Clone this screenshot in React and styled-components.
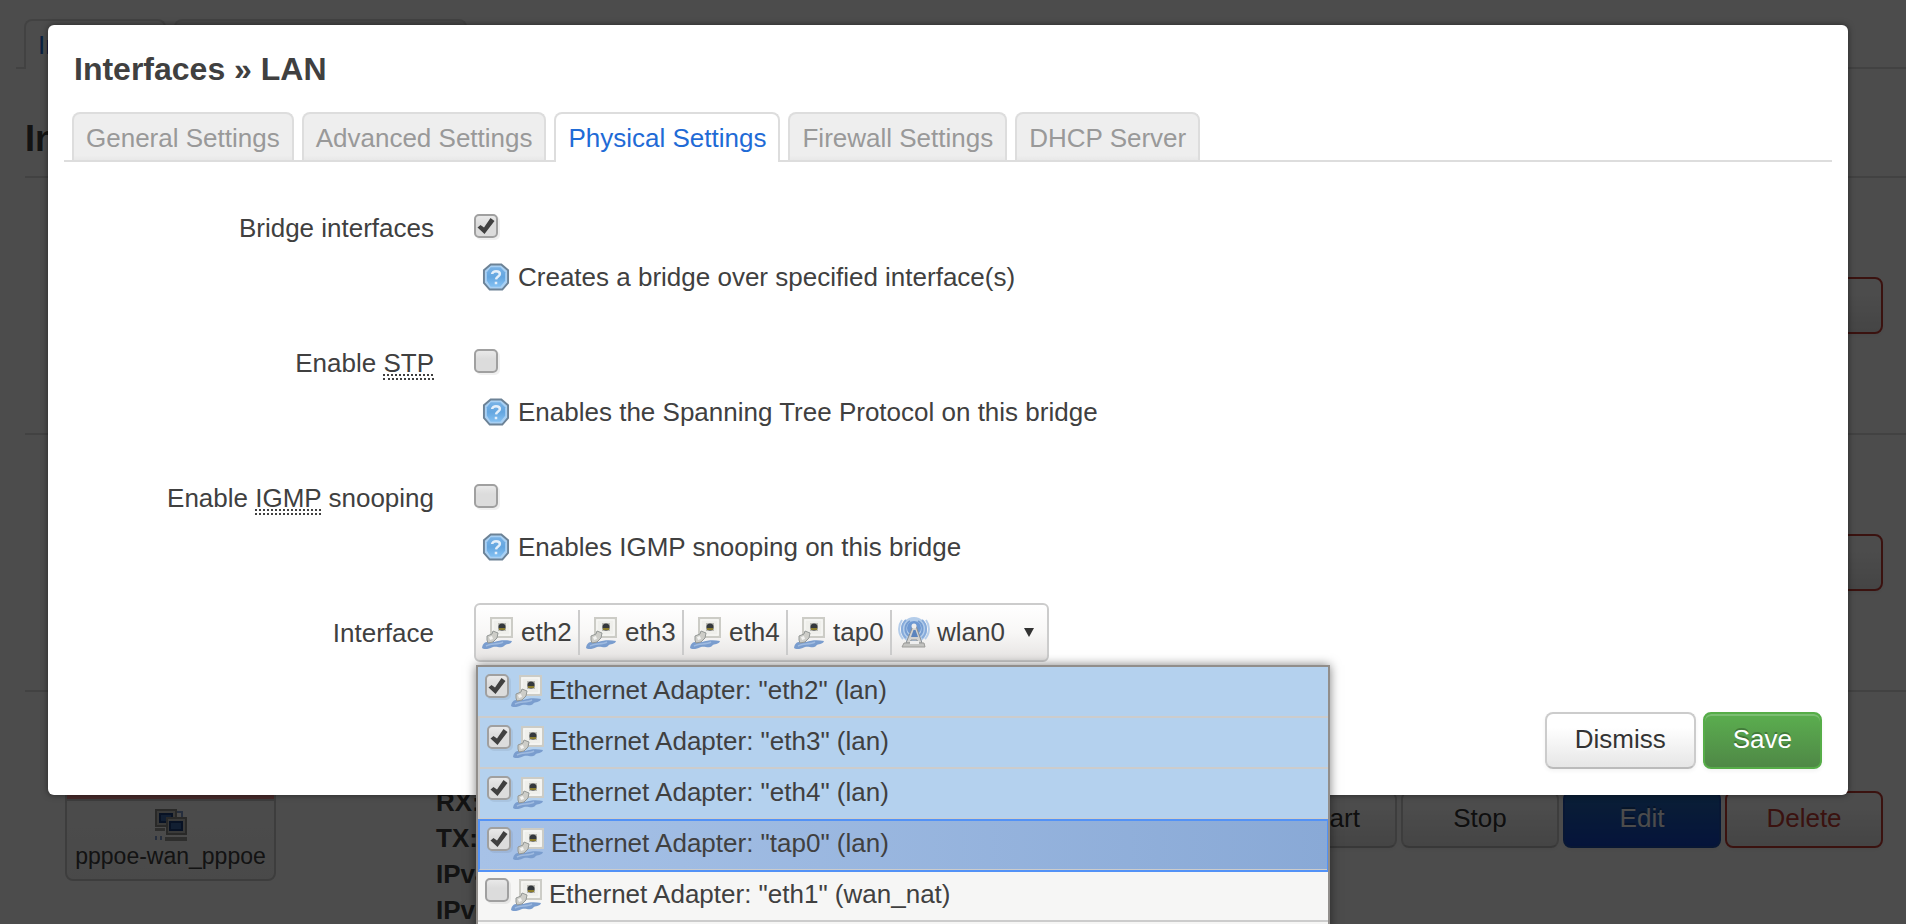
import React, { useId, useState } from "react";
import styled, { createGlobalStyle, css } from "styled-components";

const GlobalStyle = createGlobalStyle`
  * { box-sizing: border-box; }
  body {
    margin: 0;
    background: #fff;
    color: #404040;
    font: 26px/36px "Liberation Sans", Arial, sans-serif;
  }
  button, input { font: inherit; color: inherit; margin: 0; }
  h2, h3, p, ul { margin: 0; padding: 0; }
`;

/* ---------- shared parts ---------- */

const TabBar = styled.nav`
  display: flex;
  gap: 8px;
  padding: 0 8px;
  border-bottom: 2px solid #ddd;
`;

const Tab = styled.a`
  padding: 6px 12px 4px;
  border: 2px solid #ddd;
  border-bottom: 0;
  border-radius: 8px 8px 0 0;
  text-decoration: none;
  white-space: nowrap;
  ${(p) =>
    p.$active
      ? css`
          margin-bottom: -2px;
          padding-bottom: 6px;
          background: #fff;
          color: #1f6bd6;
        `
      : css`
          background: linear-gradient(#eee 90%, #e8e8e8);
          color: #999;
        `}
`;

const tones = {
  plain: css`
    background: linear-gradient(#fff 25%, #e6e6e6);
    border-color: #ccc #ccc #bbb;
    color: #333;
    text-shadow: 0 2px 2px rgba(255, 255, 255, 0.75);
  `,
  positive: css`
    background: linear-gradient(#5bae4f, #4f8846);
    border-color: #56ad48;
    color: #fff;
    text-shadow: 0 -2px 0 rgba(0, 0, 0, 0.25);
    box-shadow: inset 0 2px 0 rgba(255, 255, 255, 0.2), 0 2px 4px rgba(0, 0, 0, 0.05);
  `,
  primary: css`
    background: linear-gradient(#2468b4, #1244c4);
    border-color: #1c4fb0;
    color: #fff;
    text-shadow: 0 -2px 0 rgba(0, 0, 0, 0.25);
  `,
  negative: css`
    background: linear-gradient(#fff 25%, #e6e6e6);
    border-color: #c43c35;
    color: #c43c35;
  `,
};

const Button = styled.button`
  padding: 7px 28px 10px;
  border: 2px solid;
  border-radius: 8px;
  line-height: 36px;
  box-shadow: 0 2px 4px rgba(0, 0, 0, 0.05);
  white-space: nowrap;
  ${(p) => tones[p.$tone || "plain"]}
`;

/* ---------- page behind the dialog ---------- */

const Shell = styled.div`
  position: relative;
  height: 100vh;
  overflow: hidden;
`;

const Page = styled.main`
  padding: 19px 0 0 16px;
`;

const PageTitle = styled.h2`
  margin: 52px 0 0 9px;
  padding-bottom: 19px;
  font-size: 36px;
  line-height: 36px;
`;

const NetworkRow = styled.section`
  display: grid;
  grid-template-columns: 371px 1fr auto;
  align-items: center;
  margin-left: 9px;
  padding: 0 23px 0 40px;
  height: 257px;
  border-top: 2px solid #ddd;
`;

const NetworkCard = styled.div`
  justify-self: start;
  min-width: 211px;
  border: 2px solid #ccc;
  border-radius: 8px;
  background: linear-gradient(#fff, #f6f6f6);
  text-align: center;
  overflow: hidden;
`;

const CardHead = styled.div`
  padding: 1px 7px;
  border-bottom: 2px solid #ccc;
  background: ${(p) => p.$color};
  font-weight: bold;
`;

const CardBody = styled.div`
  display: grid;
  justify-items: center;
  padding: 8px 7px;
  font-size: 23px;
  line-height: 30px;
`;

const Details = styled.ul`
  list-style: none;
  font-weight: bold;
`;

const RowActions = styled.div`
  display: grid;
  grid-template-columns: repeat(4, 158px);
  gap: 4px;
  ${Button} { padding-left: 0; padding-right: 0; }
`;

/* ---------- dialog ---------- */

const Overlay = styled.div`
  position: absolute;
  inset: 0;
  padding: 25px 58px 0 48px;
  background: rgba(0, 0, 0, 0.7);
`;

const Dialog = styled.div`
  padding: 26px 16px;
  border-radius: 6px;
  background: #fff;
  box-shadow: 0 0 6px rgba(0, 0, 0, 0.5);
`;

const DialogTitle = styled.h3`
  margin: 0 10px 25px;
  font-size: 32px;
  line-height: 36px;
`;

const Form = styled.form`
  padding-top: 36px;
`;

const Field = styled.div`
  display: grid;
  grid-template-columns: 370px 1fr;
  column-gap: 40px;
  min-height: ${(p) => (p.$last ? "0" : "135px")};
`;

const FieldLabel = styled.label`
  padding-top: 12px;
  text-align: right;
`;

const FieldBody = styled.div`
  padding-top: 16px;
`;

const Abbr = styled.abbr`
  border-bottom: 2px dotted #404040;
  text-decoration: underline dotted 2px;
  text-underline-offset: 2px;
  text-decoration-skip-ink: none;
`;

const Hint = styled.p`
  display: flex;
  align-items: center;
  gap: 8px;
  margin-top: 21px;
  padding-left: 8px;
`;

const CheckWrap = styled.span`
  display: grid;
  width: 24px;
  height: 24px;
  svg { grid-area: 1 / 1; pointer-events: none; z-index: 1; }
`;

const CheckInput = styled.input`
  grid-area: 1 / 1;
  appearance: none;
  width: 24px;
  height: 24px;
  border: 2px solid #a0a0a0;
  border-radius: 5px;
  background: linear-gradient(#e9e9e9, #dcdcdc 40%);
  box-shadow: 2px 2px 0 rgba(0, 0, 0, 0.06);
`;

const Picker = styled.div`
  position: relative;
  justify-self: start;
`;

const PickerButton = styled.button`
  display: flex;
  align-items: center;
  height: 59px;
  padding: 5px 13px 5px 0;
  border: 2px solid #ccc;
  border-radius: 6px;
  background: linear-gradient(#fff, #f8f7f6 50%, #e6e4e3);
`;

const Picked = styled.span`
  display: flex;
  align-items: flex-start;
  gap: 7px;
  min-width: 102px;
  height: 45px;
  padding: 7px 6px 0;
  line-height: 30px;
  & + & {
    min-width: 104px;
    border-left: 2px solid #ccc;
  }
`;

const Caret = styled.svg`
  margin-left: 13px;
`;

const Menu = styled.ul`
  position: absolute;
  top: 62px;
  left: 2px;
  z-index: 2;
  width: 854px;
  padding-bottom: 8px;
  border: 2px solid #918e8b;
  background: #f6f6f5;
  box-shadow: 0 0 10px rgba(0, 0, 0, 0.5);
  list-style: none;
`;

const MenuItem = styled.li`
  display: flex;
  height: 51px;
  padding: 7px 7px 0;
  border-bottom: 2px solid #ccc;
  ${(p) =>
    p.$picked &&
    css`
      background: #b4d1ee;
      &:not(:first-child) { border-left: 2px solid #ccc; }
    `}
  ${(p) =>
    p.$focused &&
    css`
      background: linear-gradient(90deg, #a7c2e7, #89a9d6);
      outline: 2px solid #5292f7;
      outline-offset: -1px;
      clip-path: inset(-2px 0 -2px 0);
      &:not(:first-child) { border-left-color: #5292f7; }
    `}
`;

const ItemLabel = styled.label`
  display: flex;
  gap: 6px;
  padding-left: 2px;
  svg { margin-top: 1px; }
  line-height: 32px;
`;

const Actions = styled.footer`
  display: flex;
  justify-content: flex-end;
  gap: 7px;
  margin-top: 50px;
  padding-right: 10px;
`;

/* ---------- icons ---------- */

function HelpIcon() {
  const id = useId();
  return (
    <svg width="28" height="28" viewBox="0 0 29 28" aria-hidden="true">
      <defs>
        <linearGradient id={id} x1="0" y1="0" x2="0" y2="1">
          <stop offset="0" stopColor="#78b2e6" />
          <stop offset="0.5" stopColor="#64a6e0" />
          <stop offset="1" stopColor="#83c0f2" />
        </linearGradient>
      </defs>
      <path d="M9 1h11l7 6v13l-6 7H8l-6-7V7z" fill="#a9d0f3" stroke="#6c8296" strokeWidth="2" />
      <path d="M9 4h10l5 5v9l-5 6H9l-4-6V9z" fill={`url(#${id})`} />
      <path d="M10.500 11c0-4 8-4 8 0 0 2.500-3.500 2.500-4 5.500M14.500 19v2.500" fill="none" stroke="#e4effa" strokeWidth="2.600" />
    </svg>
  );
}

function EthernetIcon() {
  return (
    <svg width="32" height="32" viewBox="0 0 32 32" aria-hidden="true">
      <path d="M9 1h21v19H9z" fill="#efefeb" stroke="#ccccc6" strokeWidth="2" />
      <path d="M11 3h17v15H11z" fill="none" stroke="#f9f9f7" strokeWidth="1" />
      <path d="M16 6h8v8h-8z" fill="#babab4" />
      <circle cx="20" cy="10" r="3.500" fill="#34383c" />
      <path d="M17 12h6" stroke="#8b7c2c" strokeWidth="2" />
      <path d="M0 31c1-8 8-6 12-6 6-2 12-2 18-1-1 4-6 2-8 5-4 3-6 0-11 1-4 2-8 3-11 1z" fill="#7a9dce" />
      <path d="M4 29c5-3 12-1 17-4" fill="none" stroke="#9fbbe0" strokeWidth="1.500" />
      <path d="M5 19l5-2 1-3 5 2-1 5-4 4-5 1-1-3z" fill="#cdcdc8" stroke="#949896" strokeWidth="1" />
      <path d="M7 20l3-1 1 3-3 1z" fill="#f3f3f1" />
    </svg>
  );
}

function WirelessIcon() {
  return (
    <svg width="32" height="32" viewBox="0 0 32 32" aria-hidden="true">
      <circle cx="16" cy="13" r="13" fill="#b4cdea" />
      <g fill="none" strokeWidth="2">
        <path d="M5 22A15 15 0 0 1 4 3M27 22A15 15 0 0 0 28 3" stroke="#b5cdea" />
        <path d="M8 21A12 12 0 0 1 8 3M24 21A12 12 0 0 0 24 3" stroke="#86abdb" />
        <path d="M11 19A9 9 0 0 1 12 4M21 19A9 9 0 0 0 20 4" stroke="#759dd2" />
      </g>
      <circle cx="16" cy="11" r="7" fill="#6d98d2" />
      <path d="M15 9h3l6 17h-4l-1-3h-6l-1 3H8z" fill="#d2d2d0" stroke="#8b9094" strokeWidth="1" />
      <path d="M15.500 13h2l2.500 7h-7z" fill="#5b84bd" />
      <circle cx="16" cy="9" r="2.500" fill="#eee" />
      <path d="M6 26h20l1 4H4z" fill="#c3c3c0" stroke="#9c9c99" strokeWidth="1" />
      <path d="M12 24h9v3h-9z" fill="#eee" />
    </svg>
  );
}

function TunnelIcon() {
  return (
    <svg width="32" height="32" viewBox="0 0 32 32" aria-hidden="true">
      <path d="M22 3h5v6M1 27v4M6 27v4" fill="none" stroke="#7f9acb" strokeWidth="2" />
      <path d="M1 1h20v16H1z" fill="#c4c4c0" stroke="#8a8a86" strokeWidth="2" />
      <path d="M5 5h12v8H5z" fill="#3c68a8" stroke="#1c3d78" strokeWidth="2" />
      <path d="M0 19h10v3H0z" fill="#9a9a96" />
      <path d="M12 9h19v16H12z" fill="#c4c4c0" stroke="#8a8a86" strokeWidth="2" />
      <path d="M15 13h12v8H15z" fill="#3c68a8" stroke="#1c3d78" strokeWidth="2" />
      <path d="M10 28h22v4H10z" fill="#9a9a96" />
    </svg>
  );
}

function Check({ checked, ...rest }) {
  const [on, setOn] = useState(Boolean(checked));
  return (
    <CheckWrap>
      <CheckInput type="checkbox" checked={on} onChange={() => setOn(!on)} {...rest} />
      {on && (
        <svg width="24" height="24" viewBox="0 0 24 24" aria-hidden="true">
          <path d="M3.500 13.500 6.500 11l3.500 2.500L16.500 4 20.500 7l-10 13z" fill="#404040" />
        </svg>
      )}
    </CheckWrap>
  );
}

/* ---------- data ---------- */

const networks = [
  { name: "LAN", device: "br-lan", color: "#90f090", icon: EthernetIcon },
  { name: "WAN_NAT", device: "eth1", color: "#f09090", icon: EthernetIcon },
  { name: "WAN_PPPOE", device: "pppoe-wan_pppoe", color: "#f09090", icon: TunnelIcon },
];

const detailNames = ["Protocol:", "Uptime:", "RX:", "TX:", "IPv4:", "IPv6:"];

const tabs = ["General Settings", "Advanced Settings", "Physical Settings", "Firewall Settings", "DHCP Server"];

const options = [
  { id: "bridge", label: "Bridge interfaces", hint: "Creates a bridge over specified interface(s)", checked: true },
  { id: "stp", label: <>Enable <Abbr>STP</Abbr></>, hint: "Enables the Spanning Tree Protocol on this bridge" },
  { id: "igmp", label: <>Enable <Abbr>IGMP</Abbr> snooping</>, hint: "Enables IGMP snooping on this bridge" },
];

const picked = ["eth2", "eth3", "eth4", "tap0", "wlan0"];

const adapters = [
  { device: "eth2", network: "lan", picked: true },
  { device: "eth3", network: "lan", picked: true },
  { device: "eth4", network: "lan", picked: true },
  { device: "tap0", network: "lan", picked: true, focused: true },
  { device: "eth1", network: "wan_nat" },
];

export default function App() {
  return (
    <Shell>
      <GlobalStyle />
      <Page>
        <TabBar>
          <Tab href="#interfaces" $active>Interfaces</Tab>
          <Tab href="#global">Global network options</Tab>
        </TabBar>
        <PageTitle>Interfaces</PageTitle>
        {networks.map(({ name, device, color, icon: Icon }) => (
          <NetworkRow key={name}>
            <NetworkCard>
              <CardHead $color={color}>{name}</CardHead>
              <CardBody>
                <Icon />
                {device}
              </CardBody>
            </NetworkCard>
            <Details>
              {detailNames.map((d) => <li key={d}>{d}</li>)}
            </Details>
            <RowActions>
              <Button>Restart</Button>
              <Button>Stop</Button>
              <Button $tone="primary">Edit</Button>
              <Button $tone="negative">Delete</Button>
            </RowActions>
          </NetworkRow>
        ))}
      </Page>

      <Overlay>
        <Dialog role="dialog" aria-labelledby="dialog-title">
          <DialogTitle id="dialog-title">Interfaces » LAN</DialogTitle>
          <TabBar>
            {tabs.map((t) => (
              <Tab key={t} href="#tab" $active={t === "Physical Settings"}>{t}</Tab>
            ))}
          </TabBar>
          <Form onSubmit={(e) => e.preventDefault()}>
            {options.map((o) => (
              <Field key={o.id}>
                <FieldLabel htmlFor={o.id}>{o.label}</FieldLabel>
                <FieldBody>
                  <Check id={o.id} checked={o.checked} />
                  <Hint><HelpIcon />{o.hint}</Hint>
                </FieldBody>
              </Field>
            ))}
            <Field $last>
              <FieldLabel htmlFor="interface">Interface</FieldLabel>
              <Picker>
                <PickerButton id="interface" type="button" aria-haspopup="listbox" aria-expanded="true">
                  {picked.map((name) => (
                    <Picked key={name}>
                      {name === "wlan0" ? <WirelessIcon /> : <EthernetIcon />}
                      {name}
                    </Picked>
                  ))}
                  <Caret width="10" height="9" viewBox="0 0 10 9" aria-hidden="true">
                    <path d="M0 0h10L5 9z" fill="#333" />
                  </Caret>
                </PickerButton>
                <Menu>
                  {adapters.map((a) => (
                    <MenuItem key={a.device} $picked={a.picked} $focused={a.focused}>
                      <Check id={`pick-${a.device}`} checked={a.picked} />
                      <ItemLabel htmlFor={`pick-${a.device}`}>
                        <EthernetIcon />
                        {`Ethernet Adapter: "${a.device}" (${a.network})`}
                      </ItemLabel>
                    </MenuItem>
                  ))}
                </Menu>
              </Picker>
            </Field>
            <Actions>
              <Button type="button">Dismiss</Button>
              <Button type="submit" $tone="positive">Save</Button>
            </Actions>
          </Form>
        </Dialog>
      </Overlay>
    </Shell>
  );
}
